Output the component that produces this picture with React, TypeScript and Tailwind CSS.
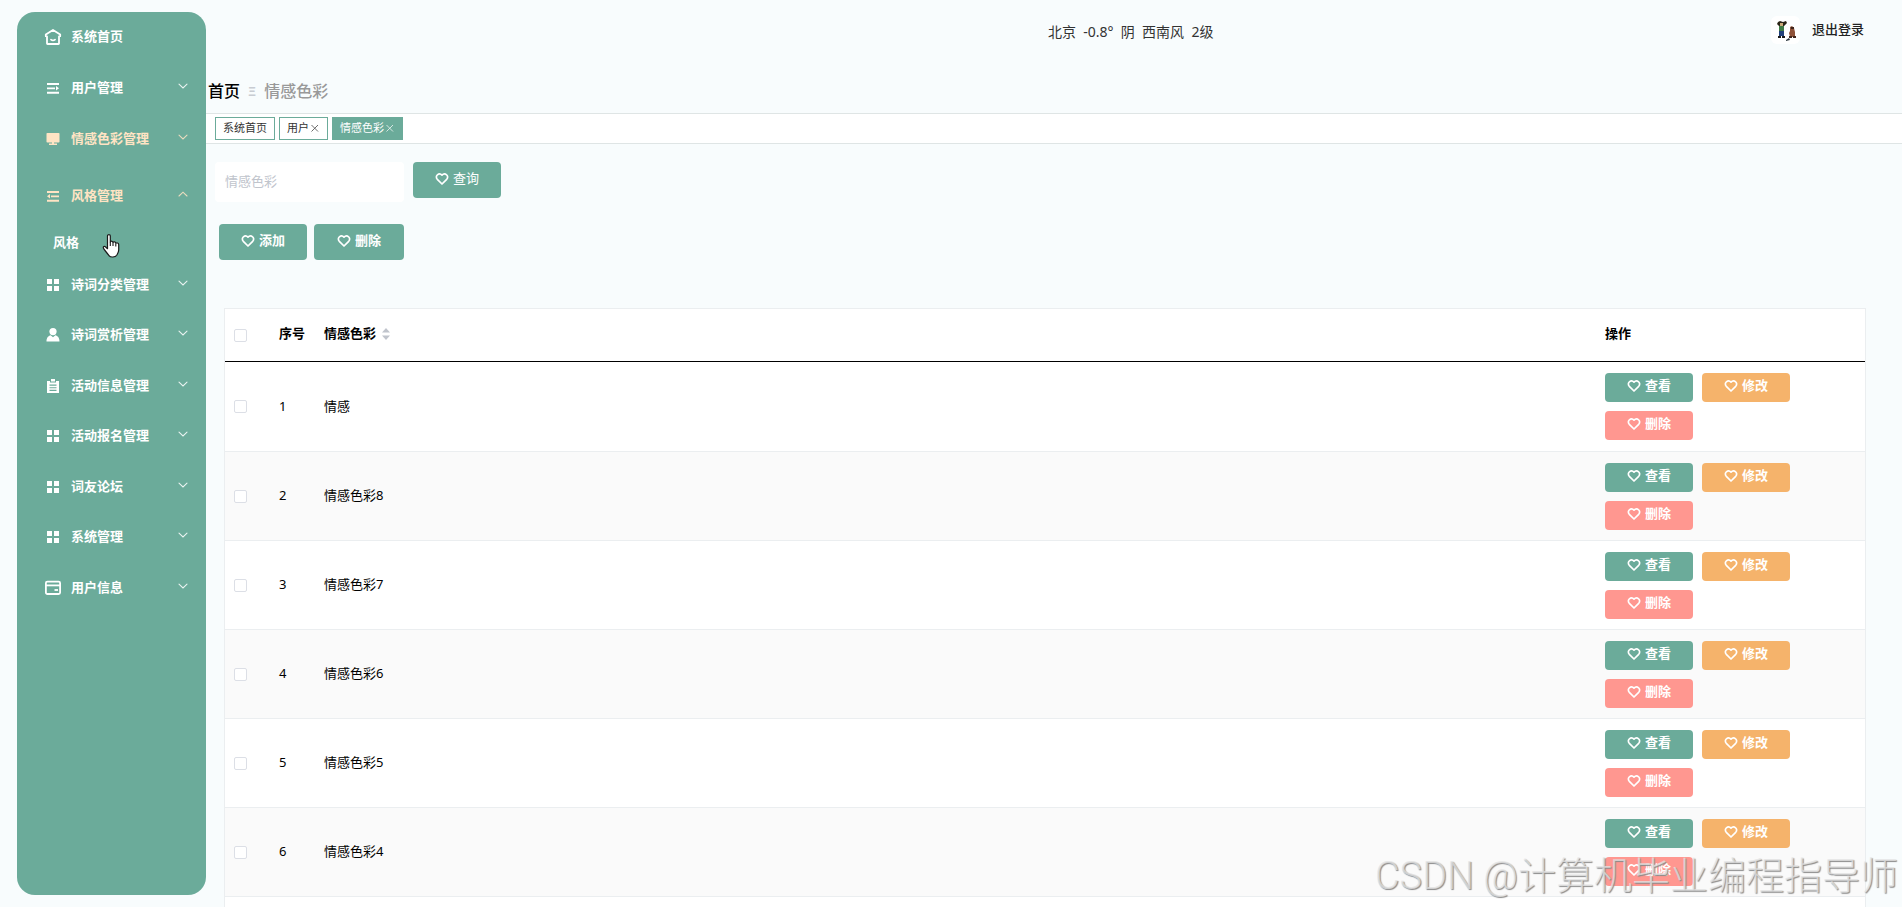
import type { ReactNode } from 'react'

type IconName = 'home' | 'unfold' | 'platform' | 'fold' | 'menu' | 'custom' | 'order' | 'card'

interface MenuItem {
  label: string
  icon: IconName
  active?: boolean
}

const topMenu: MenuItem[] = [
  { label: '用户管理', icon: 'unfold' },
  { label: '情感色彩管理', icon: 'platform', active: true },
]

const bottomMenu: MenuItem[] = [
  { label: '诗词分类管理', icon: 'menu' },
  { label: '诗词赏析管理', icon: 'custom' },
  { label: '活动信息管理', icon: 'order' },
  { label: '活动报名管理', icon: 'menu' },
  { label: '词友论坛', icon: 'menu' },
  { label: '系统管理', icon: 'menu' },
  { label: '用户信息', icon: 'card' },
]

const rows = [
  { id: 1, name: '情感' },
  { id: 2, name: '情感色彩8' },
  { id: 3, name: '情感色彩7' },
  { id: 4, name: '情感色彩6' },
  { id: 5, name: '情感色彩5' },
  { id: 6, name: '情感色彩4' },
]

// --- Icons ---

const iconShapes: Record<IconName, ReactNode> = {
  home: (
    <g fill="none" stroke="currentColor" strokeWidth="1.8" strokeLinejoin="round" strokeLinecap="round">
      <path d="M3 8.5V15.5Q3 16 3.5 16H14.5Q15 16 15 15.5V8.5" />
      <path d="M1.8 8.2V6.6L9 2L16.2 6.6V8.2" />
      <path d="M7 11.6Q9 13.2 11 11.6" />
    </g>
  ),
  unfold: (
    <g fill="currentColor">
      <path d="M3 4H15V6H3zM3 8.4H11V10.2H3zM3 12.8H15V14.8H3z" />
      <path d="M12 7L15 9.3L12 11.6z" />
    </g>
  ),
  fold: (
    <g fill="currentColor">
      <path d="M3 4H15V6H3zM7 8.4H15V10.2H7zM3 12.8H15V14.8H3z" />
      <path d="M6 7L3 9.3L6 11.6z" />
    </g>
  ),
  platform: (
    <g fill="currentColor">
      <rect x="2.5" y="3" width="13" height="9.5" rx="0.8" />
      <path d="M8 12H10V13.5H13V15H5V13.5H8z" />
    </g>
  ),
  menu: <path fill="currentColor" d="M3 3H8V8H3zM10 3H15V8H10zM3 10H8V15H3zM10 10H15V15H10z" />,
  custom: (
    <g fill="currentColor">
      <circle cx="9" cy="5.6" r="3.6" />
      <path d="M2.5 15.5C2.5 11.6 4.4 9.8 6.6 9.3L9 11.2L11.4 9.3C13.6 9.8 15.5 11.6 15.5 15.5z" />
    </g>
  ),
  order: (
    <path
      fill="currentColor"
      fillRule="evenodd"
      d="M3 4H6V5.6H12V4H15V16H3zM7 2H11V4.6H7zM5.5 7.6V8.7H12.5V7.6zM5.5 10.2V11.3H12.5V10.2zM5.5 12.8V13.9H12.5V12.8z"
    />
  ),
  card: (
    <g fill="none" stroke="currentColor" strokeWidth="1.8">
      <rect x="1.9" y="2.6" width="14.2" height="12.4" rx="1.5" />
      <path d="M2 6.4H16" />
      <path d="M10.5 11H14" />
    </g>
  ),
}

function MenuIcon({ name }: { name: IconName }) {
  return (
    <svg viewBox="0 0 18 18" className="size-[18px] shrink-0" aria-hidden="true">
      {iconShapes[name]}
    </svg>
  )
}

function ArrowIcon({ up }: { up: boolean }) {
  return (
    <svg viewBox="0 0 12 12" className="mb-1 ml-auto size-3" aria-hidden="true">
      <path
        d={up ? 'M2 8L6 4.2L10 8' : 'M2 4.2L6 8L10 4.2'}
        fill="none"
        stroke="currentColor"
        strokeWidth="1.1"
        strokeLinecap="round"
        opacity="0.85"
      />
    </svg>
  )
}

function HeartIcon() {
  return (
    <svg viewBox="0 0 14 14" className="size-[14px] shrink-0" aria-hidden="true">
      <path
        d="M7 12L2.3 7.3C1 5.8 1.1 3.8 2.4 2.8C3.8 1.7 5.8 1.9 7 3.2C8.2 1.9 10.2 1.7 11.6 2.8C12.9 3.8 13 5.8 11.7 7.3z"
        fill="none"
        stroke="currentColor"
        strokeWidth="1.7"
        strokeLinejoin="round"
      />
    </svg>
  )
}

function SortCaret() {
  return (
    <svg viewBox="0 0 8 12" className="h-3 w-2" fill="#c0c4cc" aria-hidden="true">
      <path d="M4 0L8 4.5H0z" />
      <path d="M4 12L8 7.5H0z" />
    </svg>
  )
}

function HandPointer() {
  return (
    <svg viewBox="0 0 18 24" className="absolute left-[102px] top-[234px] h-6 w-[18px]" aria-hidden="true">
      <path
        d="M5.5 1.8C5.5 .2 8.3 .2 8.3 1.8V8C8.8 6.8 11 7 11 8.4C11.8 7.4 13.8 7.8 13.8 9.2C14.8 8.5 16.7 8.9 16.7 10.6V16C16.7 18.6 15.3 20 14.7 21.3C13.4 23.5 8.4 23.5 7.2 21.8C5.6 19.6 3.6 17.6 2 15.2C.4 12.9 2 11.6 3.4 12.8L5.5 14.7z"
        fill="#fff"
        stroke="#1a1a1a"
        strokeWidth="1.2"
        strokeLinejoin="round"
      />
      <path d="M8.3 8V12M11 8.6V12M13.8 9.4V12.4" stroke="#1a1a1a" strokeWidth="1.1" />
    </svg>
  )
}

function Avatar() {
  return (
    <svg viewBox="0 0 29 28" className="h-7 w-[29px] rounded-md bg-white" aria-label="头像">
      <path d="M7 6L9 5L12 6L15 5L16 7L13 10H8L6 8z" fill="#2b2416" />
      <rect x="9" y="7" width="3" height="3" fill="#c9a877" />
      <path d="M8 10H13V16H8z" fill="#3f7a45" />
      <path d="M8 15H13V20H8z" fill="#20407a" />
      <path d="M7 20H10V22H7zM11 20H14V22H11z" fill="#1b1b1b" />
      <path d="M19 11L21 10L23 12L24 16L24 21H19L18 17L19 15z" fill="#8f5138" />
      <path d="M20 11H23V13H20zM18 20H21V22H18zM22 20H25V22H22z" fill="#41251b" />
      <path d="M15 24L18 22L19 24L15 25z" fill="#29343b" />
    </svg>
  )
}

// --- Sidebar ---

function MenuRow({ item, open = false }: { item: MenuItem; open?: boolean }) {
  return (
    <button
      type="button"
      className={`flex h-[50px] w-full items-center gap-[9px] pl-[27px] pr-[17px] text-[13px] font-bold ${
        item.active ? 'text-[#ffe4c4]' : 'text-white'
      }`}
    >
      <MenuIcon name={item.icon} />
      <span>{item.label}</span>
      <ArrowIcon up={open} />
    </button>
  )
}

function Sidebar() {
  return (
    <nav className="my-3 ml-[17px] w-[189px] shrink-0 rounded-[18px] bg-[#6bab9a]">
      <a href="#home" className="flex h-[50px] items-center gap-[9px] pl-[27px] text-[13px] font-bold text-white">
        <MenuIcon name="home" />
        系统首页
      </a>
      <div className="flex flex-col gap-px pt-px">
        {topMenu.map((item) => (
          <MenuRow key={item.label} item={item} />
        ))}
      </div>
      <div className="pt-[7px]">
        <MenuRow item={{ label: '风格管理', icon: 'fold', active: true }} open />
        <a href="#style" className="flex h-[39px] items-center pl-9 pt-1 text-[13px] font-bold text-white">
          风格
        </a>
      </div>
      <div className="[&>*:nth-child(even)]:mb-px">
        {bottomMenu.map((item) => (
          <MenuRow key={item.label} item={item} />
        ))}
      </div>
    </nav>
  )
}

// --- Top area ---

function TopBar() {
  return (
    <header className="mr-3 grid h-[74px] grid-cols-2">
      <div className="col-start-2 flex items-start justify-between pr-[26px]">
        <p className="whitespace-pre pt-[22px] text-sm leading-5 text-[#333]">北京  -0.8°  阴  西南风  2级</p>
        <div className="flex items-center gap-3 pt-4">
          <Avatar />
          <button type="button" className="text-[13px] font-medium text-[#222]">退出登录</button>
        </div>
      </div>
    </header>
  )
}

function TabClose() {
  return (
    <svg viewBox="0 0 11 11" className="size-[11px]" aria-hidden="true">
      <path d="M2.5 2L9 8.5M9 2L2.5 8.5" stroke="currentColor" strokeWidth="0.9" opacity="0.8" />
    </svg>
  )
}

function Tabs() {
  const tabClass = 'flex h-[23px] items-center border border-[#6bab9a] px-[7px] text-[11px]'
  return (
    <div className="flex h-[31px] items-center gap-1 border-y border-[#dfe5e5] bg-white pl-[9px]">
      <a href="#home" className={`${tabClass} bg-white text-[#333]`}>系统首页</a>
      <a href="#user" className={`${tabClass} bg-white text-[#333]`}>
        用户<TabClose />
      </a>
      <a href="#emotion" className={`${tabClass} bg-[#6bab9a] text-white`}>
        情感色彩<TabClose />
      </a>
    </div>
  )
}

function ActionButton({ label, className }: { label: string; className: string }) {
  return (
    <button type="button" className={`flex items-center justify-center gap-1 rounded pb-[3px] text-[13px] text-white ${className}`}>
      <HeartIcon />
      {label}
    </button>
  )
}

// --- Table ---

function RowCheckbox({ label }: { label: string }) {
  return (
    <input
      type="checkbox"
      aria-label={label}
      className="block size-[13px] appearance-none rounded-xs border border-[#dcdfe6] bg-white"
    />
  )
}

function EmotionTable() {
  return (
    <table className="w-full table-fixed border-separate border-spacing-0 text-left text-[13px] text-black">
      <colgroup>
        <col className="w-11" />
        <col className="w-[45px]" />
        <col />
        <col className="w-[270px]" />
      </colgroup>
      <thead>
        <tr className="h-[53px]">
          <th className="border-b border-black pl-[9px]"><RowCheckbox label="全选" /></th>
          <th className="whitespace-nowrap border-b border-black pb-0.5 pl-2.5 font-bold">序号</th>
          <th className="border-b border-black pb-0.5 pl-2.5 font-bold">
            <span className="flex items-center gap-1.5">情感色彩<SortCaret /></span>
          </th>
          <th className="border-b border-black pb-0.5 pl-2.5 font-bold">操作</th>
        </tr>
      </thead>
      <tbody>
        {rows.map((row) => (
          <tr key={row.id} className="h-[89px] first:h-[90px] even:bg-[#fafafa]">
            <td className="border-b border-[#ebeef0] pl-[9px]"><RowCheckbox label={`选择 ${row.name}`} /></td>
            <td className="border-b border-[#ebeef0] pl-2.5">{row.id}</td>
            <td className="border-b border-[#ebeef0] pl-2.5">{row.name}</td>
            <td className="border-b border-[#ebeef0] pl-2.5">
              <div className="flex flex-wrap gap-[9px]">
                <ActionButton label="查看" className="h-[29px] w-[88px] bg-[#6bab9a] font-bold" />
                <ActionButton label="修改" className="h-[29px] w-[88px] bg-[#f5b36b] font-bold" />
                <ActionButton label="删除" className="h-[29px] w-[88px] bg-[#ff9790] font-bold" />
              </div>
            </td>
          </tr>
        ))}
      </tbody>
    </table>
  )
}

export default function App() {
  return (
    <div className="relative flex min-h-screen bg-[#f8fcfd] font-['Noto_Sans','Noto_Sans_CJK_SC',sans-serif]">
      <Sidebar />
      <main className="flex min-w-0 flex-1 flex-col">
        <TopBar />
        <nav className="flex h-[39px] items-start gap-2 pl-0.5 pt-[5px] text-base leading-6">
          <a href="#home" className="font-medium text-black">首页</a>
          <span className="text-[13px] font-bold leading-6 text-[#c8ccd2]">Ξ</span>
          <span className="font-medium text-[#999]">情感色彩</span>
        </nav>
        <Tabs />
        <form className="flex items-start gap-[9px] pl-[9px] pt-[18px]">
          <input
            type="text"
            aria-label="情感色彩"
            placeholder="情感色彩"
            className="h-10 w-[189px] rounded bg-white px-2.5 pb-[3px] text-[13px] placeholder:text-[#c0c4cc]"
          />
          <ActionButton label="查询" className="h-9 w-[88px] bg-[#6bab9a]" />
        </form>
        <div className="flex gap-[7px] pl-[13px] pt-[22px]">
          <ActionButton label="添加" className="h-9 w-[88px] bg-[#6bab9a] font-bold" />
          <ActionButton label="删除" className="h-9 w-[90px] bg-[#6bab9a] font-bold" />
        </div>
        <section className="ml-[18px] mr-9 mt-12 flex-1 border border-b-0 border-[#ebeef0] bg-white">
          <EmotionTable />
        </section>
      </main>
      <HandPointer />
      <div className="pointer-events-none absolute bottom-1 right-1 whitespace-nowrap font-['Roboto','Noto_Sans_CJK_SC',sans-serif] text-[38px] font-light leading-[54px] text-[#e4e4e4]/75 [text-shadow:1px_1px_1px_#8a8a8a]">
        CSDN @计算机毕业编程指导师
      </div>
    </div>
  )
}
